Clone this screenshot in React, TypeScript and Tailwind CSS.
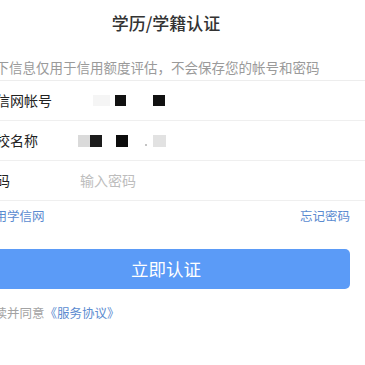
import React from "react";

function Block({ className }: { className: string }) {
  return <span className={`block shrink-0 ${className}`} />;
}

export default function App() {
  return (
    <div className="w-[365px] h-[365px] overflow-hidden bg-white font-['Noto_Sans_CJK_SC','Noto_Sans',sans-serif]">
      <div className="w-[398px] ml-[-33px]">
        {/* Header */}
        <div className="h-[46px] flex items-center justify-center text-[17px] font-medium text-[#333]">
          学历/学籍认证
        </div>

        {/* Notice */}
        <div className="h-[35px] pt-[11px] pl-[15px] border-b border-[#ededed] text-[13.5px] leading-[20px] text-[#9a9a9a] whitespace-nowrap">
          以下信息仅用于信用额度评估，不会保存您的帐号和密码
        </div>

        {/* Form rows */}
        <div className="h-[40px] pl-[15px] flex items-center border-b border-[#efefef]">
          <span className="w-[98px] text-[14px] text-[#222]">学信网帐号</span>
          <div className="flex items-center">
            <Block className="ml-[13px] w-[17px] h-[11px] bg-[#f5f5f5]" />
            <Block className="ml-[5px] w-[11px] h-[11px] bg-[#111]" />
            <Block className="ml-[27px] w-[12px] h-[11px] bg-[#111]" />
          </div>
        </div>

        <div className="h-[40px] pl-[15px] flex items-center border-b border-[#efefef]">
          <span className="w-[98px] text-[14px] text-[#222]">学校名称</span>
          <div className="flex items-center">
            <Block className="ml-[-2px] w-[12px] h-[12px] bg-[#dadada]" />
            <Block className="w-[12px] h-[12px] bg-[#1c1c1c]" />
            <Block className="ml-[14px] w-[12px] h-[12px] bg-[#0c0c0c]" />
            <Block className="ml-[17px] mt-[9px] w-[2px] h-[2px] bg-[#c4c4c4]" />
            <Block className="ml-[6px] w-[13px] h-[12px] bg-[#e2e2e2]" />
          </div>
        </div>

        <div className="h-[40px] pl-[15px] flex items-center border-b border-[#efefef]">
          <span className="w-[98px] text-[14px] text-[#222]">密码</span>
          <input
            type="password"
            placeholder="输入密码"
            className="flex-1 outline-none text-[14px] text-[#333] placeholder:text-[#bdbdbd] bg-transparent"
          />
        </div>

        {/* Links */}
        <div className="h-[30px] px-[15px] pr-[15px] flex items-center justify-between text-[12.5px] text-[#5b8bd0]">
          <span>使用学信网</span>
          <span>忘记密码</span>
        </div>

        {/* Submit */}
        <div className="px-[15px] mt-[18px]">
          <button className="w-full h-[40px] rounded-[5px] bg-[#5b9bf7] text-white text-[17.5px] flex items-center justify-center">
            立即认证
          </button>
        </div>

        {/* Agreement */}
        <div className="px-[15px] mt-[14px] text-[12.5px] leading-[20px] text-[#a3a3a3] whitespace-nowrap">
          阅读并同意<span className="text-[#5b8bd0]">《服务协议》</span>
        </div>
      </div>
    </div>
  );
}
